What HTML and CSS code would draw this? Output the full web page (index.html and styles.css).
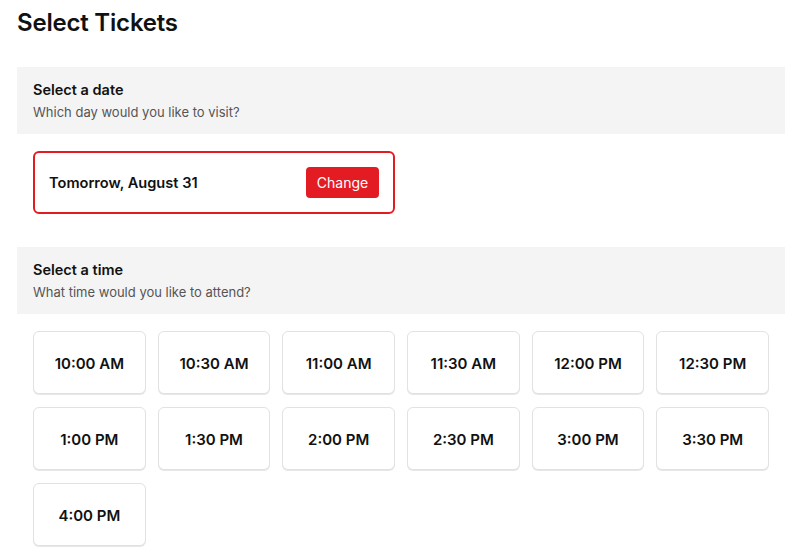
FILE: index.html
```html
<!DOCTYPE html>
<html lang="en">
<head>
    <meta charset="UTF-8">
    <meta name="viewport" content="width=device-width, initial-scale=1.0">
    <title>Select Tickets</title>
    <link rel="stylesheet" href="styles.css">
</head>
<body>
    <div class="tickets">
        <h1 class="page-title">Select Tickets</h1>

        <section class="step">
            <div class="step-header">
                <h2>Select a date</h2>
                <p>Which day would you like to visit?</p>
            </div>
            <div class="step-body">
                <div class="date-card">
                    <span class="date-label">Tomorrow, August 31</span>
                    <button type="button" class="btn-change">Change</button>
                </div>
            </div>
        </section>

        <section class="step">
            <div class="step-header">
                <h2>Select a time</h2>
                <p>What time would you like to attend?</p>
            </div>
            <div class="step-body">
                <div class="time-grid">
                    <button type="button" class="time-slot">10:00 AM</button>
                    <button type="button" class="time-slot">10:30 AM</button>
                    <button type="button" class="time-slot">11:00 AM</button>
                    <button type="button" class="time-slot">11:30 AM</button>
                    <button type="button" class="time-slot">12:00 PM</button>
                    <button type="button" class="time-slot">12:30 PM</button>
                    <button type="button" class="time-slot">1:00 PM</button>
                    <button type="button" class="time-slot">1:30 PM</button>
                    <button type="button" class="time-slot">2:00 PM</button>
                    <button type="button" class="time-slot">2:30 PM</button>
                    <button type="button" class="time-slot">3:00 PM</button>
                    <button type="button" class="time-slot">3:30 PM</button>
                    <button type="button" class="time-slot">4:00 PM</button>
                </div>
            </div>
        </section>
    </div>
</body>
</html>
```

FILE: styles.css
```css
* {
    margin: 0;
    padding: 0;
    box-sizing: border-box;
}

body {
    font-family: 'Inter', 'Liberation Sans', sans-serif;
    color: #111;
    background: white;
}

.tickets {
    width: 768px;
    margin-left: 17px;
}

.page-title {
    font-size: 24px;
    font-weight: 600;
    letter-spacing: -0.2px;
    line-height: 30px;
    padding-top: 8px;
    margin-bottom: 29px;
}

.step {
    margin-bottom: 33px;
}

.step-header {
    background: #f4f4f4;
    padding: 13px 16px 14px;
    height: 67px;
}

.step-header h2 {
    font-size: 14.5px;
    font-weight: 600;
    line-height: 20px;
}

.step-header p {
    font-size: 13px;
    color: #555;
    line-height: 20px;
    margin-top: 2px;
}

.step-body {
    padding: 17px 16px 0;
}

.date-card {
    width: 362px;
    height: 63px;
    border: 2px solid #e31c23;
    border-radius: 6px;
    display: flex;
    align-items: center;
    justify-content: space-between;
    padding: 0 14px 0 14px;
}

.date-label {
    font-size: 14.6px;
    font-weight: 600;
}

.btn-change {
    background: #e31c23;
    color: white;
    border: none;
    border-radius: 4px;
    font-family: inherit;
    font-size: 14px;
    width: 73px;
    height: 31px;
    cursor: pointer;
}

.time-grid {
    display: grid;
    grid-template-columns: repeat(6, 1fr);
    gap: 13px 12px;
    width: 736px;
}

.time-slot {
    height: 63px;
    padding-top: 2px;
    background: white;
    border: 1px solid #e2e2e2;
    border-radius: 6px;
    box-shadow: 0 1px 0 #e6e6e6;
    font-family: inherit;
    font-size: 15px;
    font-weight: 600;
    color: #111;
    cursor: pointer;
}
```
